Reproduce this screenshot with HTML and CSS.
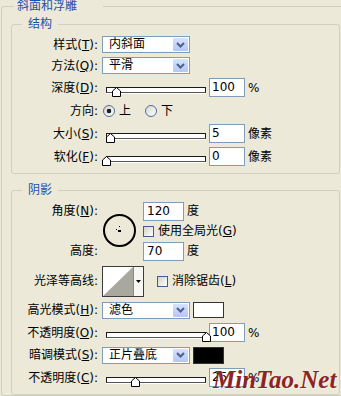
FILE: index.html
```html
<!DOCTYPE html>
<html lang="zh-CN">
<head>
  <meta charset="UTF-8">
  <meta name="viewport" content="width=device-width, initial-scale=1.0">
  <title>斜面和浮雕</title>
  <link rel="stylesheet" href="styles.css">
</head>
<body>

<fieldset class="group outer">
  <legend>斜面和浮雕</legend>

  <fieldset class="group inner structure">
    <legend>结构</legend>

    <div class="row row-sel">
      <span class="label">样式(<u>T</u>):</span>
      <div class="combo">
        <span class="combo-text">内斜面</span>
        <span class="combo-btn"><svg width="9" height="6" viewBox="0 0 9 6"><path d="M1 1 L4.5 4.5 L8 1" fill="none" stroke="#4d6185" stroke-width="2"/></svg></span>
      </div>
    </div>

    <div class="row row-sel">
      <span class="label">方法(<u>Q</u>):</span>
      <div class="combo">
        <span class="combo-text">平滑</span>
        <span class="combo-btn"><svg width="9" height="6" viewBox="0 0 9 6"><path d="M1 1 L4.5 4.5 L8 1" fill="none" stroke="#4d6185" stroke-width="2"/></svg></span>
      </div>
    </div>

    <div class="row">
      <span class="label">深度(<u>D</u>):</span>
      <div class="slider">
        <div class="track"></div>
        <svg class="thumb" style="left: 10px" width="9" height="10" viewBox="0 0 9 10"><path d="M0.5 9.5 V4 L4.5 0.5 L8.5 4 V9.5 Z" fill="#fff" stroke="#000"/></svg>
      </div>
      <div class="num">100</div>
      <span class="unit">%</span>
    </div>

    <div class="row">
      <span class="label">方向:</span>
      <span class="radio on"></span><span>上</span>
      <span class="radio second"></span><span>下</span>
    </div>

    <div class="row">
      <span class="label">大小(<u>S</u>):</span>
      <div class="slider">
        <div class="track"></div>
        <svg class="thumb" style="left: 4px" width="9" height="10" viewBox="0 0 9 10"><path d="M0.5 9.5 V4 L4.5 0.5 L8.5 4 V9.5 Z" fill="#fff" stroke="#000"/></svg>
      </div>
      <div class="num">5</div>
      <span class="unit">像素</span>
    </div>

    <div class="row">
      <span class="label">软化(<u>F</u>):</span>
      <div class="slider">
        <div class="track"></div>
        <svg class="thumb" style="left: 0px" width="9" height="10" viewBox="0 0 9 10"><path d="M0.5 9.5 V4 L4.5 0.5 L8.5 4 V9.5 Z" fill="#fff" stroke="#000"/></svg>
      </div>
      <div class="num">0</div>
      <span class="unit">像素</span>
    </div>
  </fieldset>

  <fieldset class="group inner shadow">
    <legend>阴影</legend>

    <div class="angle">
      <span class="label angle-label">角度(<u>N</u>):</span>
      <svg class="dial" width="34" height="34" viewBox="0 0 34 34">
        <circle cx="16.5" cy="16.5" r="15.5" fill="none" stroke="#000" stroke-width="2"/>
        <rect x="15" y="16" width="3" height="2" fill="#000"/>
        <rect x="16" y="12" width="1" height="1" fill="#000"/>
        <rect x="13" y="15" width="1" height="1" fill="#000"/>
      </svg>
      <div class="field angle-field">
        <div class="num num-wide">120</div>
        <span class="unit">度</span>
      </div>
      <div class="field global-field">
        <span class="check"></span><span>使用全局光(<u>G</u>)</span>
      </div>
      <span class="label height-label">高度:</span>
      <div class="field height-field">
        <div class="num num-wide">70</div>
        <span class="unit">度</span>
      </div>
    </div>

    <div class="row row-contour">
      <span class="label">光泽等高线:</span>
      <div class="contour">
        <svg width="30" height="29" viewBox="0 0 30 29"><path d="M0 29 L30 0 L30 29 Z" fill="#a9a89e"/></svg>
        <span class="contour-drop"><svg width="5" height="3" viewBox="0 0 5 3"><path d="M0 0 H5 L2.5 3 Z" fill="#000"/></svg></span>
      </div>
      <span class="check anti"></span><span>消除锯齿(<u>L</u>)</span>
    </div>

    <div class="row row-sel first-mode">
      <span class="label">高光模式(<u>H</u>):</span>
      <div class="combo">
        <span class="combo-text">滤色</span>
        <span class="combo-btn"><svg width="9" height="6" viewBox="0 0 9 6"><path d="M1 1 L4.5 4.5 L8 1" fill="none" stroke="#4d6185" stroke-width="2"/></svg></span>
      </div>
      <span class="swatch"></span>
    </div>

    <div class="row">
      <span class="label">不透明度(<u>O</u>):</span>
      <div class="slider">
        <div class="track"></div>
        <svg class="thumb" style="left: 100px" width="9" height="10" viewBox="0 0 9 10"><path d="M0.5 9.5 V4 L4.5 0.5 L8.5 4 V9.5 Z" fill="#fff" stroke="#000"/></svg>
      </div>
      <div class="num">100</div>
      <span class="unit">%</span>
    </div>

    <div class="row row-sel">
      <span class="label">暗调模式(<u>S</u>):</span>
      <div class="combo">
        <span class="combo-text">正片叠底</span>
        <span class="combo-btn"><svg width="9" height="6" viewBox="0 0 9 6"><path d="M1 1 L4.5 4.5 L8 1" fill="none" stroke="#4d6185" stroke-width="2"/></svg></span>
      </div>
      <span class="swatch swatch-dark"></span>
    </div>

    <div class="row">
      <span class="label">不透明度(<u>C</u>):</span>
      <div class="slider">
        <div class="track"></div>
        <svg class="thumb" style="left: 29px" width="9" height="10" viewBox="0 0 9 10"><path d="M0.5 9.5 V4 L4.5 0.5 L8.5 4 V9.5 Z" fill="#fff" stroke="#000"/></svg>
      </div>
      <div class="num">25</div>
      <span class="unit">%</span>
    </div>
  </fieldset>
</fieldset>

<div class="watermark">MinTao.Net</div>

</body>
</html>
```

FILE: styles.css
```css
html, body {
  margin: 0;
  height: 396px;
  overflow: hidden;
}
body {
  background: #ece9d8;
  font-family: "DejaVu Sans", "Noto Sans CJK SC", sans-serif;
  font-size: 12px;
  line-height: 14px;
  color: #000;
}
u {
  text-underline-offset: 1px;
}

/* group boxes */
.group {
  box-sizing: border-box;
  min-width: 0;
  padding: 0;
  border: 1px solid #d0d0bf;
  border-radius: 3px;
}
.group legend {
  margin-left: 10px;
  padding: 0 6px;
  line-height: 13px;
  color: #1d4fb0;
}
.outer {
  width: 340px;
  margin: 0 0 0 1px;
  border-right: 0;
  border-radius: 3px 0 0 3px;
}
.outer > legend {
  margin-left: 12px;
  padding: 0 26px 0 3px;
}
.inner {
  width: 329px;
  margin: 5px 0 0 9px;
}
.structure {
  padding: 3px 0 5px;
}
.shadow {
  margin-top: 10px;
  padding: 4px 0 5px;
}

/* rows */
.row {
  display: flex;
  align-items: center;
  height: 23px;
}
.row-sel {
  height: 21px;
}
.shadow .row-sel {
  height: 22px;
}
.label {
  flex: none;
  width: 86px;
  text-align: right;
  white-space: nowrap;
}

/* combo box */
.combo {
  box-sizing: border-box;
  display: flex;
  align-items: center;
  width: 88px;
  height: 17px;
  margin-left: 4px;
  padding: 1px 1px 1px 6px;
  border: 1px solid #7f9db9;
  background: #fff;
}
.combo-text {
  flex: 1;
  line-height: 13px;
}
.combo-btn {
  display: flex;
  align-items: center;
  justify-content: center;
  width: 15px;
  height: 13px;
  border-radius: 1px;
  background: linear-gradient(#d6e2fe, #b3c7f6);
}

/* slider */
.slider {
  position: relative;
  flex: none;
  width: 107px;
  height: 10px;
  margin: 9px 0 0 4px;
}
.track {
  box-sizing: border-box;
  width: 100px;
  height: 6px;
  margin-left: 4px;
  border: 1px solid #1a1a1a;
  border-bottom-color: #555;
  background: #fff;
  box-shadow: 0 1px 0 #fff;
}
.thumb {
  position: absolute;
  top: 0;
}

/* text fields */
.num {
  box-sizing: border-box;
  flex: none;
  width: 36px;
  height: 19px;
  padding-left: 2px;
  border: 1px solid #7f9db9;
  background: #fff;
  line-height: 17px;
}
.num-wide {
  width: 41px;
  padding-left: 3px;
}
.unit {
  margin-left: 3px;
}

/* radio and check */
.radio {
  box-sizing: border-box;
  flex: none;
  width: 12px;
  height: 12px;
  margin: 0 4px 0 5px;
  border: 1px solid #4f6f9e;
  border-radius: 50%;
  background: linear-gradient(135deg, #d6d6cf, #fff);
}
.radio.on {
  background: radial-gradient(circle, #1f1f1f 0 2px, transparent 2.6px), linear-gradient(135deg, #d6d6cf, #fff);
}
.radio.second {
  margin-left: 14px;
}
.check {
  box-sizing: border-box;
  flex: none;
  width: 11px;
  height: 11px;
  margin-right: 4px;
  border: 1px solid #3d5f8f;
  background: linear-gradient(135deg, #d2d2c9, #fff);
}
.check.anti {
  margin-left: 13px;
}

/* angle block */
.angle {
  display: grid;
  grid-template-columns: 86px 45px auto;
  grid-template-rows: 20px 20px 20px;
}
.angle-label {
  grid-column: 1;
  grid-row: 1;
  align-self: center;
}
.height-label {
  grid-column: 1;
  grid-row: 3;
  align-self: center;
}
.dial {
  grid-column: 2;
  grid-row: 1 / 4;
  align-self: center;
  margin-left: 5px;
}
.field {
  display: flex;
  align-items: center;
  grid-column: 3;
}
.angle-field { grid-row: 1; }
.global-field { grid-row: 2; }
.height-field { grid-row: 3; }

/* contour picker */
.row-contour {
  height: 32px;
  margin-top: 4px;
}
.contour {
  display: flex;
  box-sizing: border-box;
  width: 42px;
  height: 31px;
  margin-left: 4px;
  border: 1px solid #3c3c3c;
  background: #fff;
}
.contour-drop {
  display: flex;
  align-items: center;
  justify-content: center;
  flex: 1;
  border-left: 1px solid #8a8a84;
  background: #f7f6f1;
}
.first-mode {
  margin-top: 2px;
}

/* colour swatches */
.swatch {
  box-sizing: border-box;
  width: 31px;
  height: 16px;
  margin-left: 3px;
  border: 1px solid #333;
  background: #fff;
}
.swatch-dark {
  height: 17px;
  background: #000;
}

.watermark {
  position: absolute;
  left: 213px;
  top: 367px;
  font: italic bold 25px/25px "Liberation Serif", serif;
  color: #8c2424;
  text-shadow: 1px 1px 0 rgba(255, 255, 255, 0.5);
}
```
